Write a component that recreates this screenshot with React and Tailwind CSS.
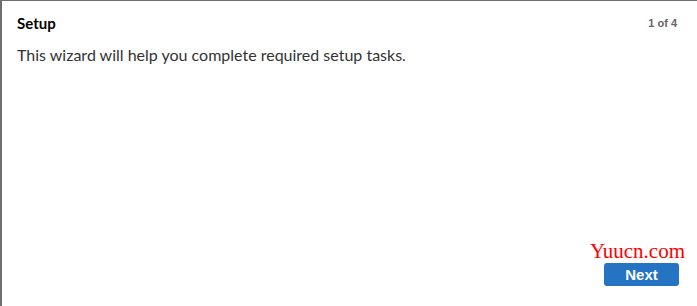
import React from 'react';

const App = () => {
  return (
    <div className="h-[306px] w-[697px] bg-white border-t border-l-2 border-[#6f6f6f] flex flex-col font-['Lato',sans-serif] text-[#333]">
      <div className="flex items-start justify-between pl-[15px] pr-[20px] pt-[12px]">
        <h2 className="text-[15px] font-bold text-black leading-[20px]">Setup</h2>
        <span className="text-[11px] font-bold text-[#666] font-['Liberation_Sans',sans-serif] leading-[20px]">1 of 4</span>
      </div>
      <p className="pl-[15px] pt-[11px] text-[16px] leading-[22px] text-[#333]">
        This wizard will help you complete required setup tasks.
      </p>
      <div className="mt-auto flex flex-col items-end pr-[18px] pb-[20px]">
        <span className="mr-[-6px] font-['Liberation_Serif',serif] text-[21px] leading-[20px] text-[#ff0000]">Yuucn.com</span>
        <button className="mt-[2px] h-[23px] w-[75px] rounded-[3px] bg-[#2574c4] font-['Liberation_Sans',sans-serif] text-[15px] font-bold text-white leading-[23px]">
          Next
        </button>
      </div>
    </div>
  );
};

export default App;
